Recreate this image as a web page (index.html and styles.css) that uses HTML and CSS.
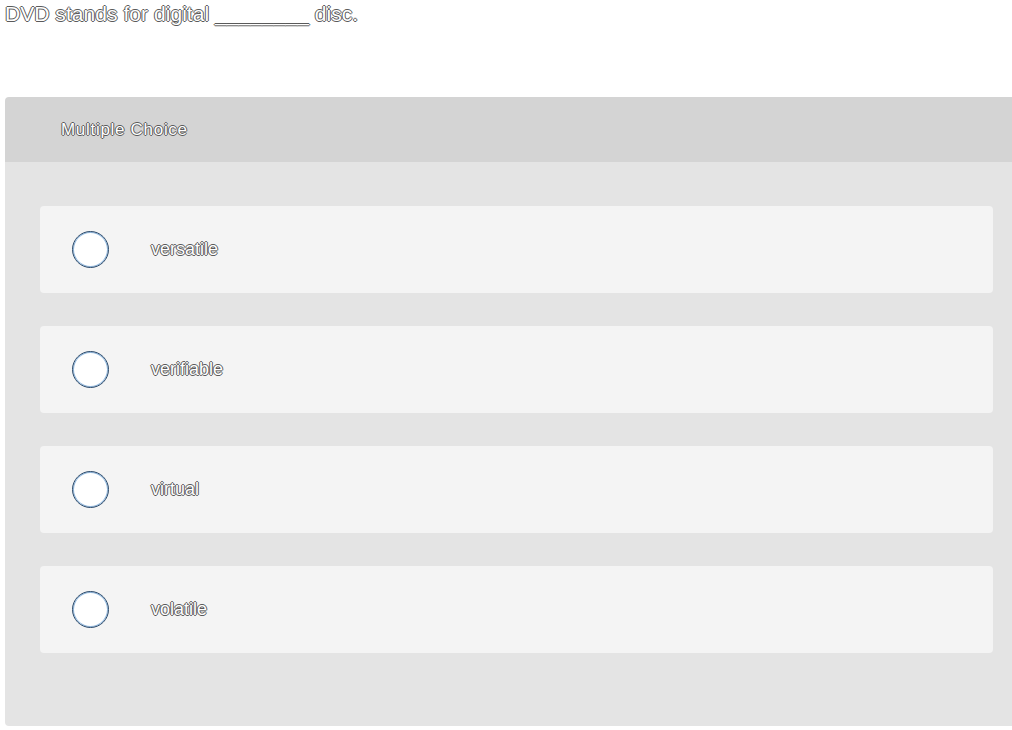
FILE: index.html
```html
<!DOCTYPE html>
<html>
<head>
<meta charset="utf-8">
<link rel="stylesheet" href="styles.css">
</head>
<body>
<p class="question">DVD stands for digital ________ disc.</p>
<section class="panel">
  <div class="panel-head">Multiple Choice</div>
  <div class="panel-body">
    <label class="option"><span class="radio"></span><span class="label">versatile</span></label>
    <label class="option"><span class="radio"></span><span class="label">verifiable</span></label>
    <label class="option"><span class="radio"></span><span class="label">virtual</span></label>
    <label class="option"><span class="radio"></span><span class="label">volatile</span></label>
  </div>
</section>
</body>
</html>
```
FILE: styles.css
```css
html, body {
  margin: 0;
  padding: 0;
  background: #ffffff;
  overflow: hidden;
}
body {
  width: 1012px;
  height: 730px;
  font-family: "Liberation Sans", Arial, sans-serif;
}
.question, .panel-head, .label {
  color: #ffffff;
  text-shadow: -1px 0 #5a5a5a, 1px 0 #5a5a5a, 0 -1px #5a5a5a, 0 1px #5a5a5a;
}
.question {
  margin: 0;
  padding: 2px 0 0 5px;
  font-size: 21px;
  line-height: 24px;
  letter-spacing: 0.05px;
  height: 94px;
  box-sizing: border-box;
}
.panel {
  margin-left: 5px;
  width: 1020px;
  border-radius: 4px 0 0 4px;
  overflow: hidden;
  margin-top: 3px;
}
.panel-head {
  background: #d4d4d4;
  height: 65px;
  padding-left: 56px;
  display: flex;
  align-items: center;
  font-size: 17px;
  letter-spacing: 0.7px;
}
.panel-body {
  background: #e4e4e4;
  padding: 44px 0 73px 35px;
  display: flex;
  flex-direction: column;
  gap: 33px;
  height: 564px;
  box-sizing: border-box;
}
.option {
  width: 953px;
  height: 87px;
  background: #f4f4f4;
  border-radius: 4px;
  display: flex;
  align-items: center;
  flex-shrink: 0;
}
.radio {
  width: 35px;
  height: 35px;
  border-radius: 50%;
  border: 1.5px solid #2a4868;
  box-shadow: inset 0 0 0 1px #8fb6dc;
  background: #ffffff;
  margin-left: 32px;
  flex-shrink: 0;
}
.label {
  margin-left: 42px;
  font-size: 18px;
}
```
